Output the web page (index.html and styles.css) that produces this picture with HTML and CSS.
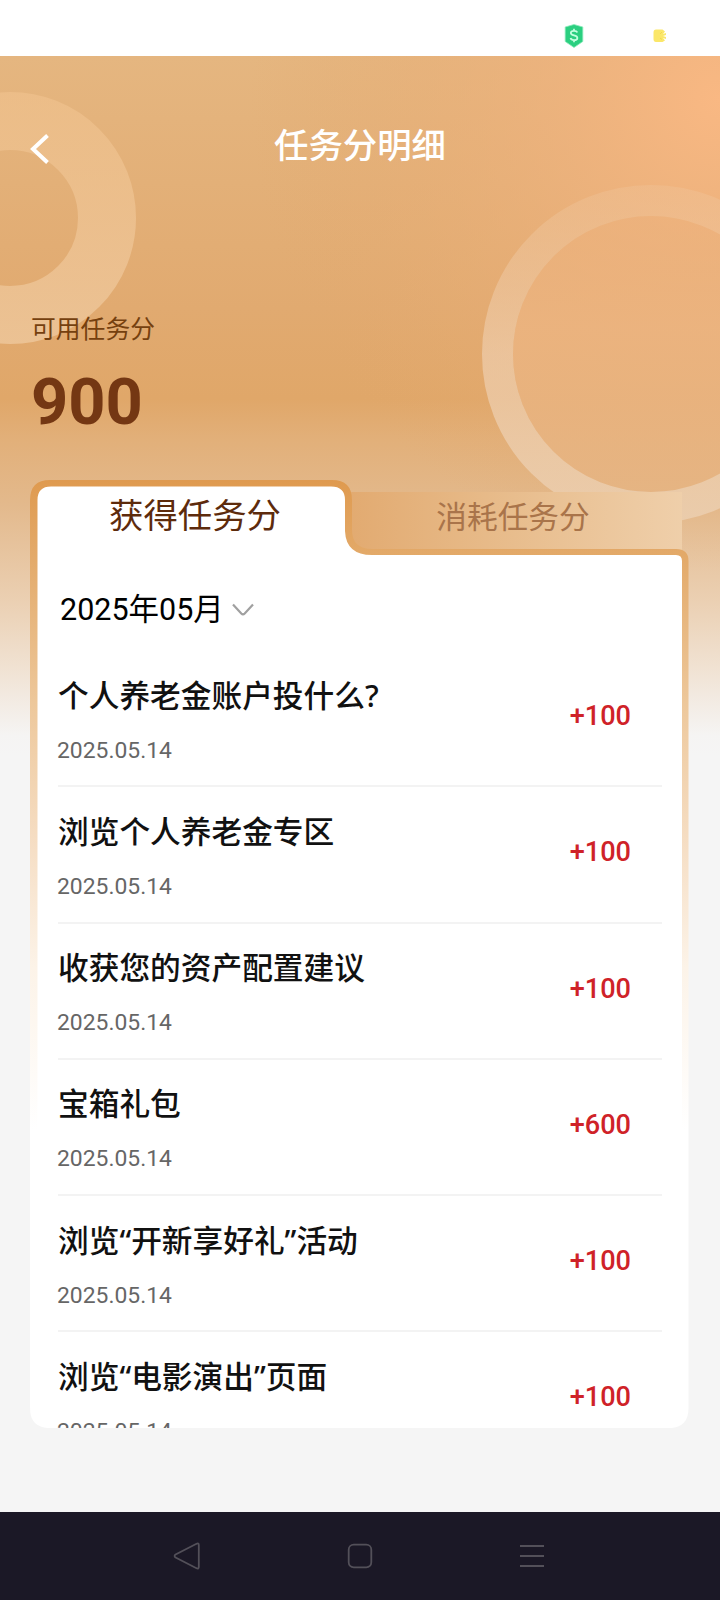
FILE: index.html
```html
<!DOCTYPE html>
<html lang="zh-CN">
<head>
<meta charset="utf-8">
<title>任务分明细</title>
<link rel="stylesheet" href="styles.css">
</head>
<body>
<div class="phone">
  <div class="status-bar">
    <svg class="shield" viewBox="0 0 20 24"><path d="M10 .5 18.800 3v14.500L10 23.500 1.200 17.500V3z" fill="#2bcf80" stroke="#8aebba" stroke-width=".8"/><path d="M13.200 8.500C12.800 7.200 11.600 6.800 10 6.800c-1.900 0-3.200.8-3.200 2.200 0 3.200 6.600 1.500 6.600 4.900 0 1.500-1.400 2.300-3.400 2.300-1.800 0-3.100-.7-3.500-2.100M10 4.700v2.200M10 16v2.300" fill="none" stroke="#c5ffe0" stroke-width="1.700"/></svg>
    <svg class="badge" viewBox="0 0 14 14"><path d="M3 .5h6.500l2.500 2-2 2.500 3-1v2l-3 1 3 1v2l-3-1 2 2.500-2.500 1.500H3Q.5 13 .5 10V3.500Q.5.5 3 .5z" fill="#fbe769"/><path d="m7 5 2-2M7 9l2 1.500" stroke="#f3d84e" stroke-width="1"/></svg>
  </div>

  <main class="screen">
    <svg class="backdrop" viewBox="0 56 720 700" preserveAspectRatio="none">
      <defs>
        <linearGradient id="base" x1="0" y1="56" x2="0" y2="756" gradientUnits="userSpaceOnUse">
          <stop offset="0" stop-color="#e5b680"/>
          <stop offset=".36" stop-color="#e1aa70"/>
          <stop offset=".49" stop-color="#e0a769"/>
          <stop offset=".55" stop-color="#e2b07a"/>
          <stop offset=".64" stop-color="#e3b98c"/>
          <stop offset=".78" stop-color="#ebd0b3"/>
          <stop offset=".87" stop-color="#f0e1d1"/>
          <stop offset=".97" stop-color="#f5f4f3"/>
          <stop offset="1" stop-color="#f5f5f5"/>
        </linearGradient>
        <radialGradient id="glow" cx="720" cy="100" r="470" gradientUnits="userSpaceOnUse">
          <stop offset="0" stop-color="#f9b883"/>
          <stop offset=".35" stop-color="#efb27d" stop-opacity=".7"/>
          <stop offset="1" stop-color="#e3a96e" stop-opacity="0"/>
        </radialGradient>
        <linearGradient id="ringA" x1="0" y1="91" x2="0" y2="345" gradientUnits="userSpaceOnUse">
          <stop offset="0" stop-color="#f1c38f" stop-opacity=".6"/>
          <stop offset="1" stop-color="#efcaa0" stop-opacity=".75"/>
        </linearGradient>
        <linearGradient id="ringB" x1="0" y1="186" x2="0" y2="523" gradientUnits="userSpaceOnUse">
          <stop offset="0" stop-color="#f0c8a0" stop-opacity=".3"/>
          <stop offset=".5" stop-color="#f0d2b5" stop-opacity=".62"/>
          <stop offset="1" stop-color="#ecd0b2" stop-opacity=".8"/>
        </linearGradient>
        <linearGradient id="disc" x1="0" y1="216" x2="0" y2="492" gradientUnits="userSpaceOnUse">
          <stop offset="0" stop-color="#edb27d" stop-opacity=".5"/>
          <stop offset=".4" stop-color="#ecb480" stop-opacity=".85"/>
          <stop offset="1" stop-color="#e6b482" stop-opacity=".8"/>
        </linearGradient>
      </defs>
      <rect y="56" width="720" height="700" fill="url(#base)"/>
      <rect y="56" width="720" height="700" fill="url(#glow)"/>
      <circle cx="10" cy="218" r="97" fill="none" stroke="url(#ringA)" stroke-width="58"/>
      <circle cx="651" cy="354" r="138" fill="url(#disc)"/>
      <circle cx="651" cy="354" r="153.500" fill="none" stroke="url(#ringB)" stroke-width="31"/>
    </svg>

    <header class="title-bar">
      <svg class="back" viewBox="0 0 20 32"><path d="M18.500 2.500 4 16l14.500 13.500" fill="none" stroke="#fff" stroke-width="4"/></svg>
      <h1 class="title">任务分明细</h1>
    </header>

    <section class="balance">
      <div class="balance-label">可用任务分</div>
      <div class="balance-value">900</div>
    </section>

    <section class="panel">
      <svg class="panel-shape" viewBox="30 480 660 948">
        <defs>
          <linearGradient id="edge" x1="0" y1="480" x2="0" y2="1130" gradientUnits="userSpaceOnUse">
            <stop offset="0" stop-color="#df9a4f"/>
            <stop offset=".12" stop-color="#e3aa6a"/>
            <stop offset=".34" stop-color="#edc79a"/>
            <stop offset=".57" stop-color="#f6dfc6"/>
            <stop offset=".75" stop-color="#fcf3e8"/>
            <stop offset="1" stop-color="#fff"/>
          </linearGradient>
          <linearGradient id="idle" x1="345" y1="0" x2="683" y2="0" gradientUnits="userSpaceOnUse">
            <stop offset="0" stop-color="#e2aa70"/>
            <stop offset=".5" stop-color="#e8bd8d"/>
            <stop offset="1" stop-color="#efcfaa"/>
          </linearGradient>
        </defs>
        <path d="M340 492H682V556H340z" fill="url(#idle)"/>
        <path d="M30 500Q30 480 50 480H332Q352 480 352 500V530Q352 549 372 549H676Q688.500 549 688.500 561V1408Q688.500 1428 669 1428H50Q30 1428 30 1408z" fill="url(#edge)"/>
        <path d="M37.500 500Q37.500 486.500 51 486.500H331Q345 486.500 345 500V531Q346 555 372 555H676Q682 555 682 561V1408Q682 1428 669 1428H50Q37.500 1428 37.500 1408z" fill="#fff"/>
      </svg>
      <nav class="tabs">
        <div class="tab tab-active">获得任务分</div>
        <div class="tab tab-idle">消耗任务分</div>
      </nav>
      <div class="month">
        <span>2025年05月</span>
        <svg class="chevron" viewBox="0 0 22 14"><path d="m1 1.500 8.300 9q1.700 1.700 3.400 0L21 1.500" fill="none" stroke="#a0a0a0" stroke-width="2.200"/></svg>
      </div>
      <ul class="records">
        <li class="record"><div><div class="name">个人养老金账户投什么?</div><div class="date">2025.05.14</div></div><div class="score">+100</div></li>
        <li class="record"><div><div class="name">浏览个人养老金专区</div><div class="date">2025.05.14</div></div><div class="score">+100</div></li>
        <li class="record"><div><div class="name">收获您的资产配置建议</div><div class="date">2025.05.14</div></div><div class="score">+100</div></li>
        <li class="record"><div><div class="name">宝箱礼包</div><div class="date">2025.05.14</div></div><div class="score">+600</div></li>
        <li class="record"><div><div class="name">浏览“开新享好礼”活动</div><div class="date">2025.05.14</div></div><div class="score">+100</div></li>
        <li class="record"><div><div class="name">浏览“电影演出”页面</div><div class="date">2025.05.14</div></div><div class="score">+100</div></li>
      </ul>
    </section>
  </main>

  <footer class="nav-bar">
    <svg class="nav-icon" viewBox="0 0 28 28"><path d="M23.500 1.800Q25.800.8 25.800 3V25Q25.800 27.200 23.500 26.200L2.600 15.600Q.6 14 2.600 12.400z"/></svg>
    <svg class="nav-icon" viewBox="0 0 28 28"><rect x="2.700" y="2.700" width="22.600" height="22.600" rx="5"/></svg>
    <svg class="nav-icon" viewBox="0 0 28 28"><path d="M1 4h24M1 14h24M1 24h24"/></svg>
  </footer>
</div>
</body>
</html>
```
FILE: styles.css
```css
* { box-sizing: border-box; }

body {
  margin: 0;
  font-family: Roboto, "Noto Sans CJK SC", sans-serif;
  background: #f5f5f5;
}

.phone {
  width: 720px;
  height: 1600px;
  display: flex;
  flex-direction: column;
  overflow: hidden;
}

.status-bar {
  height: 56px;
  flex: none;
  display: flex;
  justify-content: flex-end;
  align-items: center;
  gap: 69px;
  padding: 15px 53px 0 0;
  background: #fff;
}

.shield { width: 20px; height: 24px; }
.badge { width: 14px; height: 14px; }

.screen {
  position: relative;
  flex: 1;
  min-height: 0;
  background: #f5f5f5;
}

.backdrop {
  position: absolute;
  top: 0;
  left: 0;
  width: 720px;
  height: 700px;
}

.title-bar {
  position: relative;
  display: flex;
  justify-content: center;
  height: 180px;
  padding-top: 65px;
}

.back {
  position: absolute;
  left: 29px;
  top: 77px;
  width: 20px;
  height: 32px;
}

.title {
  margin: 0;
  color: #fff;
  font-size: 34.4px;
  line-height: 50px;
  font-weight: 500;
}

.balance {
  position: relative;
  height: 244px;
  padding: 75px 31px 0;
  color: #743713;
}

.balance-label {
  font-size: 24.8px;
  line-height: 38px;
  color: #75400f;
}

.balance-value {
  margin-top: 15px;
  font-size: 65px;
  line-height: 76px;
  font-weight: 700;
}

.panel {
  position: relative;
  width: 660px;
  height: 948px;
  margin-left: 30px;
  overflow: hidden;
}

.panel-shape {
  position: absolute;
  inset: 0;
  width: 660px;
  height: 948px;
}

.tabs {
  position: relative;
  display: grid;
  grid-template-columns: 322px 338px;
  height: 75px;
}

.tab {
  text-align: center;
  line-height: 50px;
}

.tab-active { font-size: 34.4px; color: #5d2b0c; padding: 11px 0 0 8px; }
.tab-idle { font-size: 30.7px; color: #a9744a; padding: 13px 16px 0 0; }

.month {
  position: relative;
  display: flex;
  align-items: flex-start;
  gap: 8px;
  height: 96px;
  padding: 23px 0 0 30px;
  font-size: 30.5px;
  line-height: 44px;
  color: #000;
}

.month span { padding-top: 10px; }
.chevron { width: 22px; height: 14px; margin-top: 25px; }

.records {
  position: relative;
  list-style: none;
  margin: 0;
  padding: 0 28px 0 28px;
}

.record {
  display: flex;
  justify-content: space-between;
  height: 136.3px;
  padding: 20.5px 31px 0 0;
  border-bottom: 2px solid #f3f3f3;
}

.name {
  font-family: "Noto Sans", "Noto Sans CJK SC", sans-serif;
  font-size: 30.7px;
  line-height: 46px;
  font-weight: 500;
  color: #111;
}

.date {
  margin: 17px 0 0 -1px;
  font-size: 22.9px;
  line-height: 32px;
  color: #666;
}

.score {
  padding-top: 28.5px;
  font-size: 27.1px;
  line-height: 32px;
  font-weight: 500;
  color: #cf2228;
}

.nav-bar {
  height: 88px;
  flex: none;
  display: flex;
  justify-content: center;
  align-items: center;
  gap: 145px;
  background: #1b1826;
}

.nav-icon {
  width: 28px;
  height: 28px;
  fill: none;
  stroke: #535059;
  stroke-width: 1.8;
}
```
